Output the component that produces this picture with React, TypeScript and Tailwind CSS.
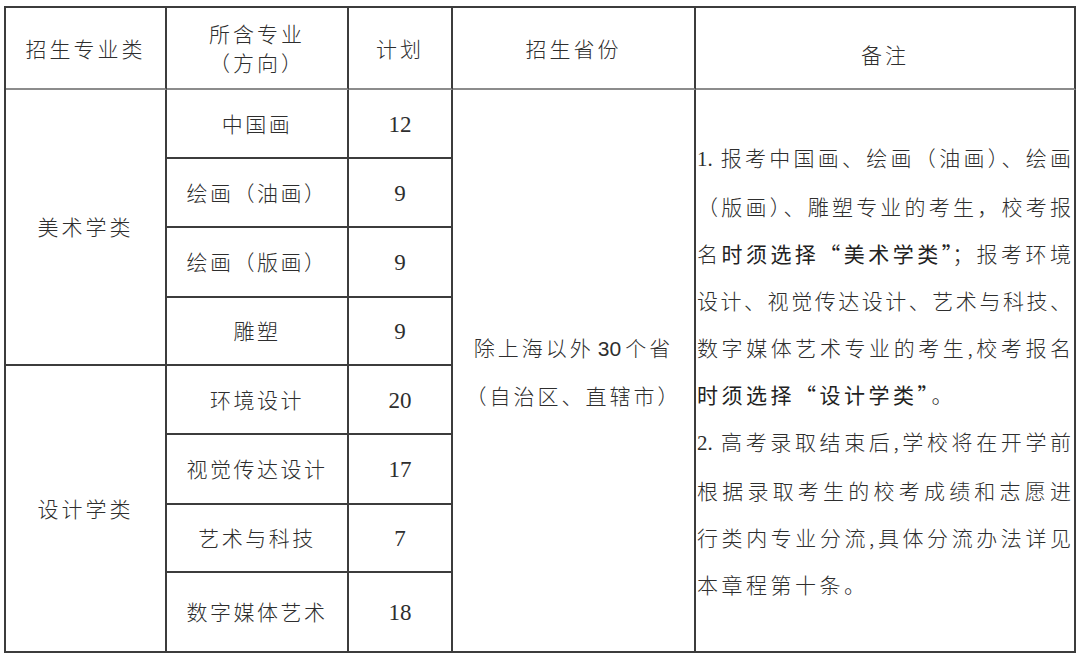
import type { ReactNode } from "react";

type Major = { name: string; plan: string; row: string };

const majors: Major[] = [
  { name: "中国画", plan: "12", row: "row-start-2" },
  { name: "绘画（油画）", plan: "9", row: "row-start-3" },
  { name: "绘画（版画）", plan: "9", row: "row-start-4" },
  { name: "雕塑", plan: "9", row: "row-start-5" },
  { name: "环境设计", plan: "20", row: "row-start-6" },
  { name: "视觉传达设计", plan: "17", row: "row-start-7" },
  { name: "艺术与科技", plan: "7", row: "row-start-8" },
  { name: "数字媒体艺术", plan: "18", row: "row-start-9" },
];

const head = "flex flex-col items-center justify-center border-r-2 border-b-2 border-r-[#3c3c3c] border-b-[#8c8c8c] leading-[29px]";
const cell = "flex items-center justify-center border-r-2 border-b-2 border-[#3c3c3c]";

function Num({ children }: { children: ReactNode }) {
  return <span className="[font-family:'Liberation_Serif',serif] tracking-normal">{children}</span>;
}

// one justified line of the notes column
function J({ children }: { children: ReactNode }) {
  return <div className="text-justify [text-align-last:justify]">{children}</div>;
}

function B({ children }: { children: ReactNode }) {
  return <span className="font-normal text-[#222]">{children}</span>;
}

export default function App() {
  return (
    <div
      lang="zh-CN"
      className="h-[655px] w-[1080px] overflow-hidden bg-white pt-[6px] pl-[4px] text-[21px] text-[#2e2e2e] [font-family:'Noto_Sans_CJK_SC',sans-serif] font-light"
    >
      <div className="grid grid-cols-[161px_182px_104px_243px_380px] grid-rows-[82px_69px_69px_70px_68px_69px_70px_68px_80px] w-[1072px] border-t-2 border-l-2 border-[#3c3c3c]">
        <div className={`${head} tracking-[3px]`}>招生专业类</div>
        <div className={`${head} tracking-[3px]`}>
          <span>所含专业</span>
          <span>（方向）</span>
        </div>
        <div className={`${head} tracking-[3px]`}>计划</div>
        <div className={`${head} tracking-[3px]`}>招生省份</div>
        <div className={`${head} tracking-[3px] pt-[12px]`}>备注</div>

        <div className={`${cell} col-start-1 row-start-2 row-span-4 tracking-[3px]`}>美术学类</div>
        <div className={`${cell} col-start-1 row-start-6 row-span-4 tracking-[3px]`}>设计学类</div>

        {majors.map((m) => (
          <div key={m.name} className="contents">
            <div className={`${cell} col-start-2 ${m.row} tracking-[2.5px]`}>{m.name}</div>
            <div className={`${cell} col-start-3 ${m.row} pt-[3px] text-[23px]`}>
              <Num>{m.plan}</Num>
            </div>
          </div>
        ))}

        <div className={`${cell} col-start-4 row-start-2 row-span-8 flex-col leading-[46px] tracking-[3px]`}>
          <span>
            除上海以外<span className="[font-family:'Liberation_Sans',sans-serif] px-[4px] tracking-normal">30</span>个省
          </span>
          <span>（自治区、直辖市）</span>
        </div>

        <div className={`${cell} col-start-5 row-start-2 row-span-8 justify-start pl-[1px] pr-[3px]`}>
          <div className="w-full leading-[47px]">
            <J>
              <Num>1.</Num> 报考中国画、绘画（油画）、绘画
            </J>
            <J>（版画）、雕塑专业的考生，校考报</J>
            <J>
              名<B>时须选择“美术学类”</B>；报考环境
            </J>
            <J>设计、视觉传达设计、艺术与科技、</J>
            <J>数字媒体艺术专业的考生,校考报名</J>
            <div className="tracking-[3.5px]">
              <B>时须选择“设计学类”</B>。
            </div>
            <J>
              <Num>2.</Num> 高考录取结束后,学校将在开学前
            </J>
            <J>根据录取考生的校考成绩和志愿进</J>
            <J>行类内专业分流,具体分流办法详见</J>
            <div className="tracking-[3.5px]">本章程第十条。</div>
          </div>
        </div>
      </div>
    </div>
  );
}
